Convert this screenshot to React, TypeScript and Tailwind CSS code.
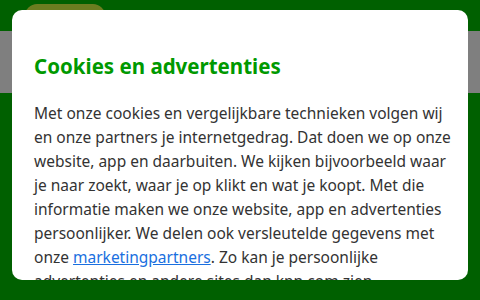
export default function App() {
  return (
    <div className="relative w-[480px] h-[300px] overflow-hidden bg-[#006000]" style={{ fontFamily: '"Noto Sans", "Open Sans", sans-serif' }}>
      <div className="h-[31px] bg-[#006000] pl-[25px] pt-[4px]">
        <div className="w-[80px] h-[27px] rounded-t-[12px] bg-[#6b7d20]" />
      </div>
      <div className="h-[62px] bg-[#7f7f7f]" />
      <div className="absolute left-[12px] top-[10px] w-[456px] h-[270px] rounded-[10px] bg-white overflow-hidden px-[22px] pt-[42px]">
        <h2 className="text-[20.5px] leading-[28px] font-bold text-[#009900]">Cookies en advertenties</h2>
        <p className="mt-[21px] text-[15.5px] leading-[24px] text-[#333333] whitespace-nowrap">
          Met onze cookies en vergelijkbare technieken volgen wij<br />
          en onze partners je internetgedrag. Dat doen we op onze<br />
          website, app en daarbuiten. We kijken bijvoorbeeld waar<br />
          je naar zoekt, waar je op klikt en wat je koopt. Met die<br />
          informatie maken we onze website, app en advertenties<br />
          persoonlijker. We delen ook versleutelde gegevens met<br />
          onze <a href="#" className="text-[#1a6fe0] underline">marketingpartners</a>. Zo kan je persoonlijke<br />
          advertenties en andere sites dan kpn.com zien.
        </p>
      </div>
    </div>
  );
}
